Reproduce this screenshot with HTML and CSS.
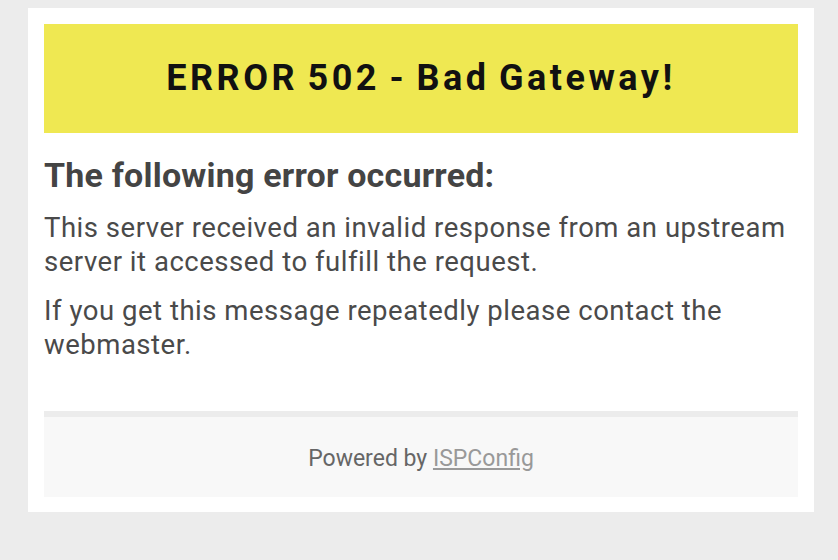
FILE: index.html
```html
<!DOCTYPE html>
<html>
<head>
    <meta charset="UTF-8">
    <title>ERROR 502 - Bad Gateway!</title>
    <link rel="stylesheet" href="styles.css">
</head>
<body>
    <div class="page">
        <h1 class="banner">ERROR 502 - Bad Gateway!</h1>
        <div class="content">
            <h2>The following error occurred:</h2>
            <p>This server received an invalid response from an upstream server it accessed to fulfill the request.</p>
            <p>If you get this message repeatedly please contact the webmaster.</p>
        </div>
        <div class="footer">
            Powered by <a href="#">ISPConfig</a>
        </div>
    </div>
</body>
</html>
```

FILE: styles.css
```css
body {
    margin: 0;
    background-color: #ececec;
    font-family: 'Roboto', 'Liberation Sans', sans-serif;
    color: #444;
}

.page {
    background-color: #fff;
    margin: 8px 24px 0 28px;
    padding: 16px 16px 15px;
}

.banner {
    margin: 0;
    background-color: #efe852;
    color: #111;
    font-size: 36px;
    letter-spacing: 3.5px;
    word-spacing: -3px;
    font-weight: bold;
    text-align: center;
    height: 109px;
    line-height: 109px;
}

.content {
    padding: 22px 0 49px;
}

.content h2 {
    margin: 0 0 16px;
    font-size: 34px;
    letter-spacing: 0.2px;
    font-weight: bold;
    color: #444;
    line-height: 40px;
}

.content p {
    margin: 0 0 15px;
    font-size: 27.5px;
    letter-spacing: 0.52px;
    line-height: 34px;
    color: #4a4a4a;
}

.content p:last-child {
    margin-bottom: 0;
}

.footer {
    border-top: 6px solid #ececec;
    background-color: #f8f8f8;
    height: 80px;
    line-height: 84px;
    text-align: center;
    font-size: 23px;
    color: #666;
}

.footer a {
    color: #999;
}
```
